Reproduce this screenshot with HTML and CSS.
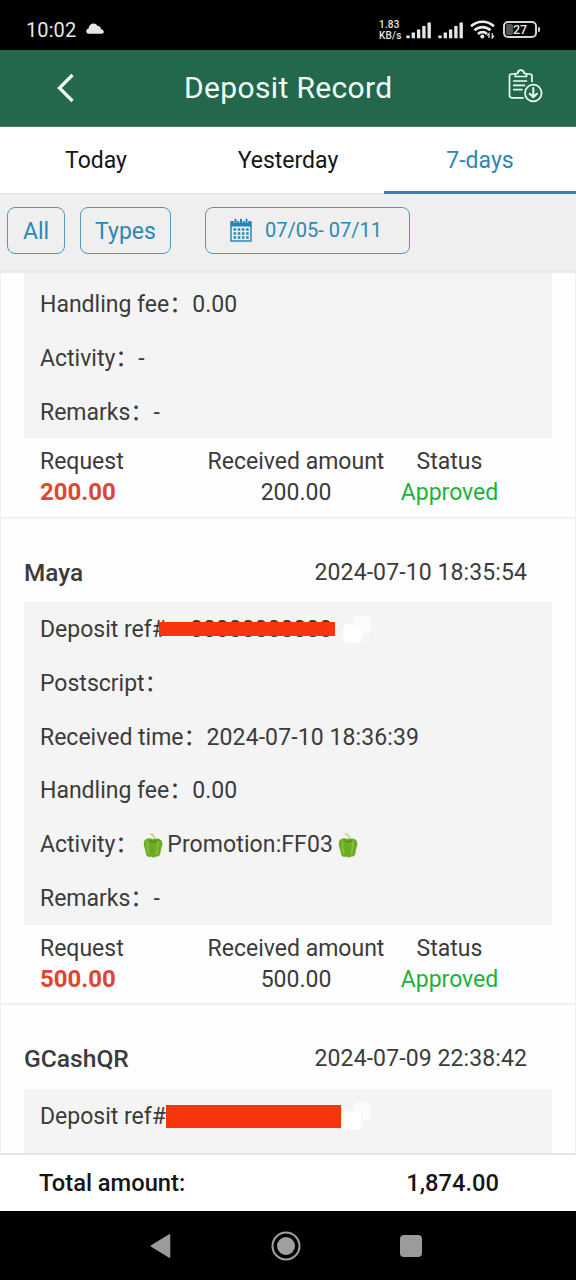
FILE: index.html
```html
<!DOCTYPE html>
<html lang="en">
<head>
<meta charset="utf-8">
<title>Deposit Record</title>
<link rel="stylesheet" href="styles.css">
</head>
<body>
<svg class="defs" width="0" height="0" aria-hidden="true">
  <symbol id="pepper" viewBox="0 0 20 26">
    <path d="M11.500 8C12 4.500 10.500 2.800 7.500 1.800" fill="none" stroke="#c0dc78" stroke-width="1.800" stroke-linecap="round"/>
    <path d="M10 7.200C7 5.400 1.500 6 .8 10.500C.3 14.500 2.500 17 2.800 21C3 24.500 6 25.600 8.300 24.500C10 26 12 25.600 13.200 24.500C16 25 17.500 23 17.600 20C17.800 16.500 19.800 14.500 19.300 10.500C18.500 6.300 14 5.800 10 7.200Z" fill="#6cac25"/>
    <path d="M4.500 10C3.500 14 5.500 18 5.600 22M14.800 10C15.500 14 13.600 18 13.500 22" fill="none" stroke="#83c034" stroke-width="2" stroke-linecap="round"/>
    <path d="M7 8.500C9 10 12 10 14 8.300" fill="none" stroke="#4f8a1c" stroke-width="1.300"/>
  </symbol>
  <symbol id="copy" viewBox="0 0 30 30">
    <rect x="11" y="1" width="18" height="18" rx="4" fill="#fbfbfb"/>
    <rect x="1" y="9" width="19" height="19" rx="4" fill="#fff" stroke="#f7f7f7" stroke-width="1"/>
  </symbol>
  <symbol id="signal" viewBox="0 0 26 18">
    <path d="M2 17.300V14.500M7.300 17.300V11.500M12.600 17.300V8.500M17.900 17.300V5M23.200 17.300V1.500" stroke="#e8e8e8" stroke-width="3.300" fill="none"/>
  </symbol>
</svg>
<div class="screen">
  <div class="status">
    <span class="clock">10:02</span>
    <svg class="cloud" width="18" height="11" viewBox="0 0 18 11"><path d="M2.500 10.800C-.8 10.300-.3 6 2.600 5.500C3 0 9.500-1.200 11.600 3C14 2.800 15 4.500 15 6.300C18 6.300 18.800 10 16 10.800Z" fill="#e6e6e6"/></svg>
    <span class="speed"><span>1.83</span><span>KB/s</span></span>
    <svg class="sig" width="26" height="18"><use href="#signal"/></svg>
    <svg class="sig2" width="26" height="18"><use href="#signal"/></svg>
    <svg class="wifi" width="25" height="19" viewBox="0 0 25 19"><g fill="none" stroke="#e8e8e8" stroke-width="2.600"><path d="M1 6.300C7.500 .2 17.500 .2 24 6.300"/><path d="M4.500 10.300C9 6 16 6 20.500 10.300"/><path d="M8 14C10.500 11.500 14.500 11.500 17 14"/></g><circle cx="12.300" cy="16.500" r="2" fill="#e8e8e8"/><path d="M19 18V13.500L17.200 15.600M22.200 13V18L24 15.600" fill="none" stroke="#e8e8e8" stroke-width="1.200"/></svg>
    <span class="battery"><span class="level"></span><span class="pct">27</span></span><span class="tip"></span>
  </div>
  <div class="appbar">
    <svg class="back" width="18" height="30" viewBox="0 0 18 30"><path d="M15.500 2L2.500 15L15.500 28" fill="none" stroke="#eefff7" stroke-width="3.300"/></svg>
    <h1>Deposit Record</h1>
    <svg class="clip" width="36" height="34" viewBox="0 0 36 34"><g fill="none" stroke="#e9fff4" stroke-width="1.700" stroke-linecap="round" stroke-linejoin="round"><path d="M15 28.800H3.800Q1.500 28.800 1.500 26.500V7.300Q1.500 5 3.800 5H7M18.500 5H21.700Q24 5 24 7.300V12.500M7.300 7.500V4.500H9.700C10 0 15.800 0 16.100 4.500H18.500V7.500Z"/><path d="M5.700 12H18.500M5.700 16.300H16.500M5.700 20.600H14"/><circle cx="25.300" cy="24" r="8.300"/><path d="M25.300 19V28M21.700 24.700L25.300 28.300L28.900 24.700" stroke-width="2"/></g></svg>
  </div>
  <div class="tabs">
    <span class="tab">Today</span><span class="tab">Yesterday</span><span class="tab active">7-days</span>
  </div>
  <div class="filters">
    <span class="btn all">All</span>
    <span class="btn types">Types</span>
    <span class="btn range">
      <svg width="22" height="24" viewBox="0 0 22 24"><path d="M1 4H21V23H1Z" fill="none" stroke="#2a88b5" stroke-width="1.500"/><path d="M1 3H21V8.500H1Z" fill="#2585b6"/><path d="M5.500 .5V5M11 .5V5M16.500 .5V5" stroke="#f0f0f0" stroke-width="3.400"/><path d="M5.500 .8V5M11 .8V5M16.500 .8V5" stroke="#2585b6" stroke-width="2"/><path d="M3.500 11.500H19M3.500 15.500H19M3.500 19.500H19" stroke="#2a88b5" stroke-width="2.500" stroke-dasharray="2.600 1.600"/></svg>
      <span>07/05- 07/11</span>
    </span>
  </div>
  <div class="list">
    <section class="card first">
      <div class="details">
        <div class="row">Handling fee：<span>0.00</span></div>
        <div class="row">Activity：<span>-</span></div>
        <div class="row">Remarks：<span>-</span></div>
      </div>
      <div class="summary">
        <div class="req"><span>Request</span><b>200.00</b></div>
        <div class="rec"><span>Received amount</span><span>200.00</span></div>
        <div class="sta"><span>Status</span><span class="ok">Approved</span></div>
      </div>
    </section>
    <section class="card">
      <div class="head"><b>Maya</b><span>2024-07-10 18:35:54</span></div>
      <div class="details">
        <div class="row">Deposit ref#<span class="masked"><span class="digits">00000000000</span><span class="bar thin"></span></span><svg class="copy" width="30" height="30"><use href="#copy"/></svg></div>
        <div class="row">Postscript：</div>
        <div class="row">Received time：<span class="time">2024-07-10 18:36:39</span></div>
        <div class="row">Handling fee：<span>0.00</span></div>
        <div class="row">Activity：<svg class="pepper lead" width="20" height="26"><use href="#pepper"/></svg><span class="time">Promotion:FF03</span><svg class="pepper" width="20" height="26"><use href="#pepper"/></svg></div>
        <div class="row">Remarks：<span>-</span></div>
      </div>
      <div class="summary">
        <div class="req"><span>Request</span><b>500.00</b></div>
        <div class="rec"><span>Received amount</span><span>500.00</span></div>
        <div class="sta"><span>Status</span><span class="ok">Approved</span></div>
      </div>
    </section>
    <section class="card third">
      <div class="head"><b class="wide">GCashQR</b><span>2024-07-09 22:38:42</span></div>
      <div class="details last">
        <div class="row">Deposit ref#<span class="masked"><span class="bar thick"></span></span><svg class="copy" width="30" height="30"><use href="#copy"/></svg></div>
      </div>
    </section>
  </div>
  <div class="total"><b>Total amount:</b><b>1,874.00</b></div>
  <div class="nav">
    <svg width="22" height="26" viewBox="0 0 22 26"><path d="M19.500 1.800V24.200L1.500 13Z" fill="#9b9b9b" stroke="#9b9b9b" stroke-width="1.500" stroke-linejoin="round"/></svg>
    <svg width="30" height="30" viewBox="0 0 30 30"><circle cx="15" cy="15" r="13.500" fill="none" stroke="#a0a0a0" stroke-width="2"/><circle cx="15" cy="15" r="9" fill="#a0a0a0"/></svg>
    <span class="square"></span>
  </div>
</div>
</body>
</html>
```
FILE: styles.css
```css
* { box-sizing: border-box; }
body { margin: 0; background: #fff; font-family: Roboto, "Noto Sans CJK SC", sans-serif; font-size: 23px; color: #3b3b3b; }
.defs { position: absolute; }
.screen { width: 576px; height: 1280px; display: flex; flex-direction: column; overflow: hidden; }
svg { flex: none; display: block; }

.status { height: 50px; flex: none; background: #000; color: #e6e6e6; display: flex; align-items: center; padding: 9px 0 0 26px; }
.clock { font-size: 20px; width: 60px; letter-spacing: .1px; white-space: nowrap; }
.cloud { margin-top: -2px; }
.speed { margin-left: 275px; width: 27px; font-size: 10px; letter-spacing: .2px; line-height: 11px; font-weight: 500; display: flex; flex-direction: column; white-space: nowrap; }
.sig2 { margin-left: 6px; }
.wifi { margin-left: 6px; }
.battery { position: relative; margin-left: 8px; width: 34px; height: 17px; border: 2px solid #d5d5d5; border-radius: 5px; display: flex; align-items: center; justify-content: center; }
.level { position: absolute; left: 1px; top: 1px; width: 7px; height: 11px; background: #555; border-radius: 2px; }
.pct { position: relative; font-size: 12.500px; font-weight: 500; line-height: 13px; }
.tip { width: 2px; height: 5px; margin-left: 1px; background: #ccc; border-radius: 1px; }

.appbar { height: 77px; flex: none; background: #23684c; border-bottom: 1px solid #4f7565; display: flex; align-items: center; color: #f1fff9; }
.back { margin-left: 57px; }
.appbar h1 { margin: 0 0 1px 109px; width: 324px; font-weight: 400; font-size: 30px; letter-spacing: .35px; white-space: nowrap; }
.clip { margin-top: -4px; }

.tabs { height: 67px; flex: none; display: flex; background: #fff; color: #151515; }
.tab { flex: 1; display: flex; align-items: center; justify-content: center; border-bottom: 1px solid #dcdfe0; }
.tab.active { color: #2d87b2; border-bottom: 3px solid #3484b5; padding-top: 2px; }

.filters { height: 79px; flex: none; background: #efefef; border-bottom: 2px solid #ebebeb; display: flex; align-items: flex-start; padding: 13px 0 0 7px; color: #2d87b2; }
.btn { height: 47px; border: 1.5px solid #5796b6; border-radius: 8px; display: flex; align-items: center; justify-content: center; white-space: nowrap; padding-top: 1px; }
.all { width: 58px; }
.types { width: 91px; margin-left: 15px; }
.range { width: 205px; margin-left: 34px; gap: 13px; font-size: 20px; padding: 0 3px 1px 0; }

.list { flex: 1; min-height: 0; overflow: hidden; }
.card { height: 486px; border: 1px solid #f0f0f0; border-top: 0; border-bottom: 2px solid #f1f1f1; padding: 0 23px; background: #fefefe; }
.card.first { height: 246px; }
.head { height: 83px; padding: 23px 25px 0 0; display: flex; align-items: center; justify-content: space-between; white-space: nowrap; }
.third .head { height: 84px; padding-top: 22px; }
.head span, .time { letter-spacing: .1px; }
.head b { font-weight: 500; font-size: 24.300px; }
.head b.wide { font-size: 24.600px; }
.details { background: #f4f4f4; padding-left: 16px; }
.first .details { padding-top: 4px; }
.last { height: 90px; }
.row { height: 53.800px; line-height: 52px; padding-top: 2px; display: flex; align-items: center; white-space: nowrap; }
.masked { position: relative; width: 175px; height: 27px; line-height: 27px; }
.digits { padding-left: 24px; }
.bar { position: absolute; background: #f6350f; }
.bar.thin { left: -7px; top: 6px; width: 176px; height: 14px; }
.bar.thick { left: 0; top: 2px; width: 175px; height: 23px; }
.copy { margin-left: 1px; }
.pepper { margin-left: 5px; }
.pepper.lead { margin: 0 4px 0 5px; }
.summary { height: 79px; display: flex; padding: 8px 0 0 16px; line-height: 31px; white-space: nowrap; }
.summary > div { display: flex; flex-direction: column; align-items: center; }
.summary .req { width: 167px; align-items: flex-start; }
.req b { font-weight: 700; font-size: 24px; color: #e0462f; }
.rec { width: 178px; }
.sta { width: 129px; }
.ok { color: #20b13b; }

.total { height: 58px; flex: none; background: #fff; border-top: 2px solid #e5e5e5; color: #161616; display: flex; align-items: center; justify-content: space-between; padding: 0 77px 0 39px; }
.total b { font-weight: 500; font-size: 23.700px; }
.nav { height: 69px; flex: none; background: #000; display: flex; align-items: center; padding-left: 150px; }
.nav svg:nth-child(2) { margin-left: 99px; }
.square { width: 22px; height: 22px; margin-left: 99px; background: #9b9b9b; border-radius: 4px; }
```
